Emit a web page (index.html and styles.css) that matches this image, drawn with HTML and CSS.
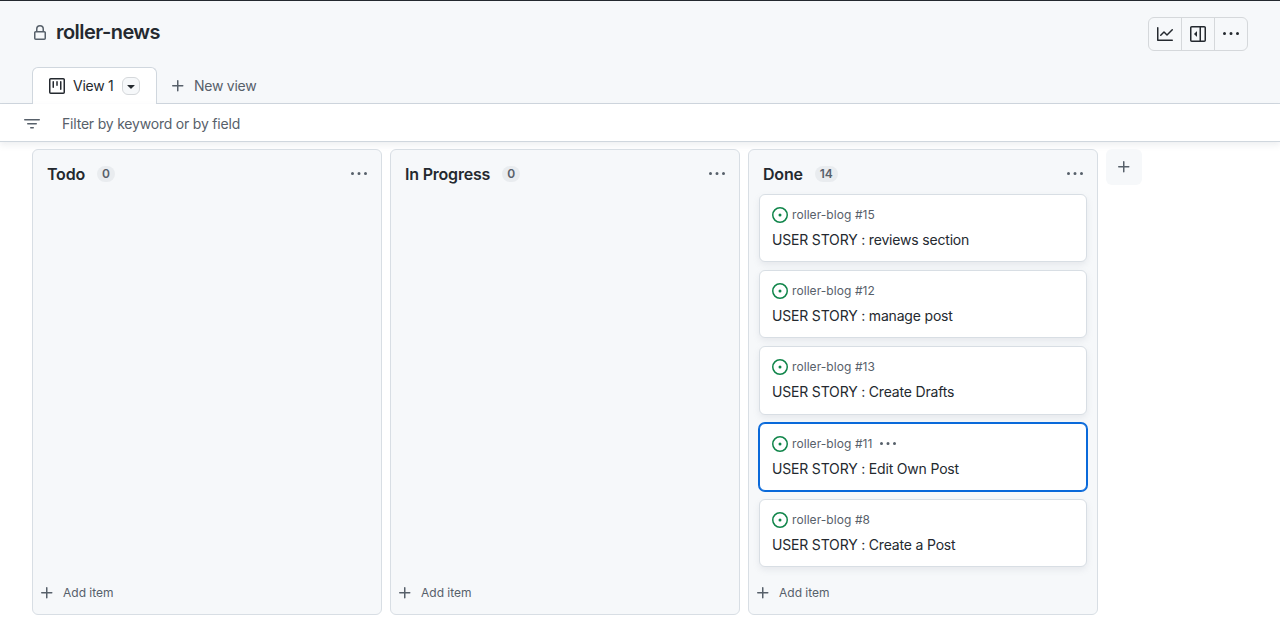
FILE: index.html
```
<!DOCTYPE html>
<html lang="en">
<head>
<meta charset="utf-8">
<title>roller-news</title>
<link rel="stylesheet" href="styles.css">
</head>
<body>
<svg class="sprite" aria-hidden="true">
  <symbol id="lock" viewBox="0 0 16 16"><path d="M4 4a4 4 0 0 1 8 0v2h.25c.966 0 1.75.784 1.75 1.75v5.5A1.75 1.75 0 0 1 12.25 15h-8.5A1.75 1.75 0 0 1 2 13.25v-5.5C2 6.784 2.784 6 3.75 6H4Zm8.25 3.5h-8.5a.25.25 0 0 0-.25.25v5.5c0 .138.112.25.25.25h8.5a.25.25 0 0 0 .25-.25v-5.5a.25.25 0 0 0-.25-.25ZM10.5 6V4a2.5 2.5 0 1 0-5 0v2Z"/></symbol>
  <symbol id="dots" viewBox="0 0 16 16"><path d="M8 9a1.5 1.5 0 1 0 0-3 1.5 1.5 0 0 0 0 3ZM1.5 9a1.5 1.5 0 1 0 0-3 1.5 1.5 0 0 0 0 3Zm13 0a1.5 1.5 0 1 0 0-3 1.5 1.5 0 0 0 0 3Z"/></symbol>
  <symbol id="issue" viewBox="0 0 16 16"><path d="M8 9.5a1.5 1.5 0 1 0 0-3 1.5 1.5 0 0 0 0 3Z"/><path d="M8 0a8 8 0 1 1 0 16A8 8 0 0 1 8 0ZM1.5 8a6.5 6.5 0 1 0 13 0 6.5 6.5 0 0 0-13 0Z"/></symbol>
  <symbol id="graph" viewBox="0 0 16 16"><path d="M1.5 1.75V13.5h13.75a.75.75 0 0 1 0 1.5H.75a.75.75 0 0 1-.75-.75V1.75a.75.75 0 0 1 1.5 0Zm14.28 2.53-5.25 5.25a.75.75 0 0 1-1.06 0L7 7.06 4.28 9.78a.751.751 0 0 1-1.042-.018.751.751 0 0 1-.018-1.042l3.25-3.25a.75.75 0 0 1 1.06 0L10 7.94l4.72-4.72a.751.751 0 0 1 1.042.018.751.751 0 0 1 .018 1.042Z"/></symbol>
  <symbol id="sidebar" viewBox="0 0 16 16"><path d="m4.177 7.823 2.396-2.396A.25.25 0 0 1 7 5.604v4.792a.25.25 0 0 1-.427.177L4.177 8.177a.25.25 0 0 1 0-.354Z"/><path d="M0 1.75C0 .784.784 0 1.75 0h12.5C15.216 0 16 .784 16 1.75v12.5A1.75 1.75 0 0 1 14.25 16H1.75A1.75 1.75 0 0 1 0 14.25Zm1.75-.25a.25.25 0 0 0-.25.25v12.5c0 .138.112.25.25.25H9.5v-13Zm12.5 13a.25.25 0 0 0 .25-.25V1.75a.25.25 0 0 0-.25-.25H11v13Z"/></symbol>
  <symbol id="project" viewBox="0 0 16 16"><path d="M1.75 0h12.5C15.216 0 16 .784 16 1.75v12.5A1.75 1.75 0 0 1 14.25 16H1.75A1.75 1.75 0 0 1 0 14.25V1.75C0 .784.784 0 1.75 0ZM1.5 1.75v12.5c0 .138.112.25.25.25h12.5a.25.25 0 0 0 .25-.25V1.75a.25.25 0 0 0-.25-.25H1.75a.25.25 0 0 0-.25.25ZM11.75 3a.75.75 0 0 1 .75.75v7.5a.75.75 0 0 1-1.5 0v-7.5a.75.75 0 0 1 .75-.75Zm-8.25.75a.75.75 0 0 1 1.5 0v5.5a.75.75 0 0 1-1.5 0ZM8 3a.75.75 0 0 1 .75.75v3.5a.75.75 0 0 1-1.5 0v-3.5A.75.75 0 0 1 8 3Z"/></symbol>
  <symbol id="filter" viewBox="0 0 16 16"><path d="M.75 3h14.5a.75.75 0 0 1 0 1.5H.75a.75.75 0 0 1 0-1.5ZM3 7.75A.75.75 0 0 1 3.75 7h8.5a.75.75 0 0 1 0 1.5h-8.5A.75.75 0 0 1 3 7.75Zm3 4a.75.75 0 0 1 .75-.75h2.5a.75.75 0 0 1 0 1.5h-2.5a.75.75 0 0 1-.75-.75Z"/></symbol>
  <symbol id="plus" viewBox="0 0 16 16"><path d="M7.75 2a.75.75 0 0 1 .75.75V7h4.25a.75.75 0 0 1 0 1.5H8.5v4.25a.75.75 0 0 1-1.5 0V8.5H2.75a.75.75 0 0 1 0-1.5H7V2.75A.75.75 0 0 1 7.75 2Z"/></symbol>
  <symbol id="caret" viewBox="0 0 16 16"><path d="m4.427 7.427 3.396 3.396a.25.25 0 0 0 .354 0l3.396-3.396A.25.25 0 0 0 11.396 7H4.604a.25.25 0 0 0-.177.427Z"/></symbol>
</svg>

<header class="header">
  <div class="title-row">
    <svg class="icon muted"><use href="#lock"/></svg>
    <h1 class="title">roller-news</h1>
    <div class="button-group">
      <button class="group-button"><svg class="icon"><use href="#graph"/></svg></button>
      <button class="group-button"><svg class="icon"><use href="#sidebar"/></svg></button>
      <button class="group-button"><svg class="icon"><use href="#dots"/></svg></button>
    </div>
  </div>
  <nav class="tabs">
    <div class="tab">
      <svg class="icon"><use href="#project"/></svg>
      <span class="tab-label">View 1</span>
      <button class="tab-menu"><svg class="icon"><use href="#caret"/></svg></button>
    </div>
    <button class="new-view"><svg class="icon"><use href="#plus"/></svg><span class="new-view-label">New view</span></button>
  </nav>
</header>

<div class="filter-bar">
  <svg class="icon"><use href="#filter"/></svg>
  <span class="filter-label">Filter by keyword or by field</span>
</div>

<main class="board">
  <section class="column">
    <div class="column-head"><h2 class="column-title">Todo</h2><span class="count">0</span><svg class="icon column-menu"><use href="#dots"/></svg></div>
    <div class="cards"></div>
    <button class="add-item"><svg class="icon"><use href="#plus"/></svg><span>Add item</span></button>
  </section>
  <section class="column">
    <div class="column-head"><h2 class="column-title">In Progress</h2><span class="count">0</span><svg class="icon column-menu"><use href="#dots"/></svg></div>
    <div class="cards"></div>
    <button class="add-item"><svg class="icon"><use href="#plus"/></svg><span>Add item</span></button>
  </section>
  <section class="column">
    <div class="column-head"><h2 class="column-title">Done</h2><span class="count">14</span><svg class="icon column-menu"><use href="#dots"/></svg></div>
    <div class="cards">
      <article class="card"><div class="card-meta"><svg class="icon open"><use href="#issue"/></svg><span>roller-blog #15</span></div><div class="card-title">USER STORY : reviews section</div></article>
      <article class="card"><div class="card-meta"><svg class="icon open"><use href="#issue"/></svg><span>roller-blog #12</span></div><div class="card-title">USER STORY : manage post</div></article>
      <article class="card"><div class="card-meta"><svg class="icon open"><use href="#issue"/></svg><span>roller-blog #13</span></div><div class="card-title">USER STORY : Create Drafts</div></article>
      <article class="card selected"><div class="card-meta"><svg class="icon open"><use href="#issue"/></svg><span>roller-blog #11</span><svg class="icon card-menu"><use href="#dots"/></svg></div><div class="card-title">USER STORY : Edit Own Post</div></article>
      <article class="card"><div class="card-meta"><svg class="icon open"><use href="#issue"/></svg><span>roller-blog #8</span></div><div class="card-title">USER STORY : Create a Post</div></article>
    </div>
    <button class="add-item"><svg class="icon"><use href="#plus"/></svg><span>Add item</span></button>
  </section>
  <button class="add-column"><svg class="icon"><use href="#plus"/></svg></button>
</main>
</body>
</html>
```
FILE: styles.css
```
* { box-sizing: border-box; }
body {
  margin: 0;
  height: 619px;
  overflow: hidden;
  display: flex;
  flex-direction: column;
  background: #fff;
  color: #24292f;
  font: 14px/20px Inter, "Liberation Sans", sans-serif;
}
.sprite { display: none; }
.icon { width: 16px; height: 16px; flex: none; fill: currentColor; display: block; }
button { font: inherit; color: inherit; border: 0; padding: 0; background: none; }
h1, h2 { margin: 0; }

.header {
  height: 104px;
  flex: none;
  display: flex;
  flex-direction: column;
  justify-content: space-between;
  border-top: 1px solid #24292f;
  background: #f6f8fa;
  box-shadow: inset 0 -1px #d0d7de;
}
.title-row { display: flex; align-items: flex-start; height: 64px; padding: 16px 32px 0; }
.muted { margin-top: 8px; color: #57606a; }
.title { margin-left: 8px; font-size: 20px; line-height: 30px; font-weight: 600; letter-spacing: -0.54px; }
.button-group { display: flex; margin-left: auto; width: 100px; border: 1px solid #d5d8db; border-radius: 6px; height: 34px; }
.group-button { width: 32px; display: grid; place-items: center; }
.group-button + .group-button { width: 33px; border-left: 1px solid #d5d8db; }

.tabs { display: flex; padding-left: 32px; }
.tab {
  width: 125px;
  height: 37px;
  display: flex;
  align-items: center;
  padding-left: 16px;
  border: 1px solid #d0d7de;
  border-bottom: 0;
  border-radius: 6px 6px 0 0;
  background: #fff;
}
.tab-label { width: 49px; margin-left: 8px; white-space: nowrap; letter-spacing: -0.25px; }
.tab-menu { width: 18px; height: 18px; display: grid; place-items: center; border: 1px solid #d5d8db; border-radius: 6px; background: #f6f8fa; }
.tab-menu .icon { margin: -1px; }
.new-view { display: flex; align-items: center; height: 37px; padding-left: 13px; color: #57606a; }
.new-view-label { margin-left: 8px; letter-spacing: -0.25px; }

.filter-bar {
  height: 38px;
  flex: none;
  display: flex;
  align-items: center;
  padding: 2px 24px 0;
  border-bottom: 1px solid #d0d7de;
  color: #57606a;
  box-shadow: 0 3px 6px rgba(140, 149, 159, 0.15);
}
.filter-label { margin-left: 22px; letter-spacing: -0.2px; }

.board { display: flex; gap: 8px; padding: 7px 32px 0; height: 473px; }
.column {
  width: 350px;
  height: 466px;
  display: flex;
  flex-direction: column;
  border: 1px solid #d8dee4;
  border-radius: 6px;
  background: #f6f8fa;
}
.column-head { height: 44px; display: flex; align-items: center; padding: 4px 14px 0; }
.column-title { font-size: 16px; line-height: 24px; font-weight: 600; white-space: nowrap; letter-spacing: -0.2px; }
.count { margin-left: 12px; padding: 0 5px; min-width: 18px; text-align: center; border-radius: 9px; background: #e9ecef; color: #57606a; font-size: 12px; line-height: 16px; font-weight: 600; }
.column-menu { margin-left: auto; color: #57606a; }
.cards { flex: 1; display: flex; flex-direction: column; gap: 8px; padding: 0 10px; }
.card {
  height: 68.2px;
  flex: none;
  padding: 10px 12px;
  border: 1px solid #d8dee4;
  border-radius: 6px;
  background: #fff;
  box-shadow: 0 3px 6px rgba(140, 149, 159, 0.15);
}
.card.selected { border-color: #0969da; box-shadow: 0 0 0 1px #0969da; }
.card-meta { display: flex; align-items: center; height: 20px; color: #57606a; font-size: 12px; letter-spacing: 0.07px; }
.card-meta span { margin-left: 4px; }
.card-menu { margin-left: 8px; }
.open { color: #10854a; }
.card-title { margin-top: 5px; white-space: nowrap; letter-spacing: -0.18px; }
.add-item { display: flex; align-items: center; height: 43px; padding-left: 6px; color: #57606a; font-size: 12px; }
.add-item span { margin-left: 8px; }
.add-column { width: 36px; height: 36px; display: grid; place-items: center; border-radius: 6px; background: #f6f8fa; color: #57606a; }
```
